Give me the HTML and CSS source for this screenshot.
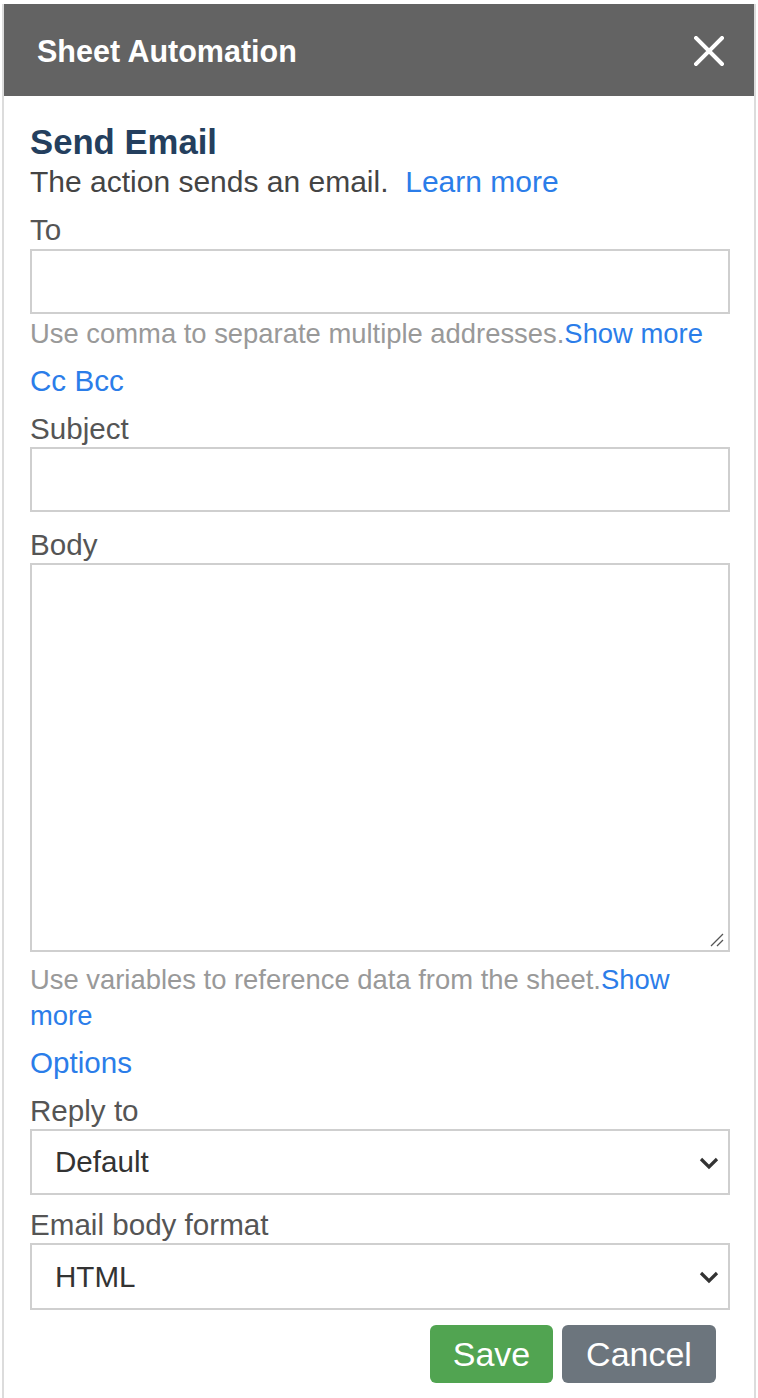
FILE: index.html
```html
<!DOCTYPE html>
<html>
<head>
<meta charset="utf-8">
<link rel="stylesheet" href="styles.css">
</head>
<body>
<div class="panel">
  <div class="header">
    <span class="header-title">Sheet Automation</span>
    <svg class="close" width="30" height="30" viewBox="0 0 30 30"><path d="M2 2 L28 28 M28 2 L2 28" stroke="#fff" stroke-width="4" stroke-linecap="square" fill="none"/></svg>
  </div>
  <div class="content">
    <h1 class="title">Send Email</h1>
    <p class="desc">The action sends an email.&nbsp; <a class="link">Learn more</a></p>
    <div class="label lbl-to">To</div>
    <div class="box box-to"></div>
    <p class="help">Use comma to separate multiple addresses.<a class="link">Show more</a></p>
    <a class="link block-link ccbcc">Cc Bcc</a>
    <div class="label">Subject</div>
    <div class="box box-subject"></div>
    <div class="label lbl-body">Body</div>
    <div class="box box-body">
      <svg class="grip" width="16" height="16" viewBox="0 0 16 16"><path d="M3 15 L15 3 M9 15 L15 9" stroke="#555" stroke-width="1.3" fill="none"/></svg>
    </div>
    <p class="help help2">Use variables to reference data from the sheet.<a class="link">Show</a> <a class="link">more</a></p>
    <a class="link block-link options">Options</a>
    <div class="label">Reply to</div>
    <div class="select select-reply"><span>Default</span><svg width="22" height="14" viewBox="0 0 22 14"><path d="M3 3 L11 11 L19 3" stroke="#333" stroke-width="3.2" fill="none"/></svg></div>
    <div class="label">Email body format</div>
    <div class="select select-format"><span>HTML</span><svg width="22" height="14" viewBox="0 0 22 14"><path d="M3 3 L11 11 L19 3" stroke="#333" stroke-width="3.2" fill="none"/></svg></div>
    <div class="actions">
      <button class="btn btn-save">Save</button>
      <button class="btn btn-cancel">Cancel</button>
    </div>
  </div>
</div>
</body>
</html>
```
FILE: styles.css
```css
html, body {
  margin: 0;
  padding: 0;
  background: #ffffff;
}
body {
  font-family: "Liberation Sans", Arial, Helvetica, sans-serif;
  width: 758px;
  height: 1398px;
  overflow: hidden;
}
.panel {
  margin: 4px 2px 0 2px;
  border-left: 2px solid #dcdcdc;
  border-right: 2px solid #dcdcdc;
  height: 1394px;
  box-sizing: border-box;
  background: #fff;
}
.header {
  height: 92px;
  background: #636363;
  display: flex;
  align-items: center;
  justify-content: space-between;
  padding: 0 30px 0 33px;
}
.header-title {
  color: #fff;
  font-weight: bold;
  font-size: 30.5px;
  line-height: 36px;
  margin-top: 1px;
}
.close {
  display: block;
  margin-top: 1px;
}
.content {
  padding: 26px 24px 0 26px;
}
.title {
  margin: 0;
  font-size: 34.7px;
  line-height: 40px;
  font-weight: bold;
  color: #243f5e;
}
.desc {
  margin: 2px 0 0;
  font-size: 30px;
  line-height: 36px;
  color: #444;
}
.link {
  color: #2b7de9;
  text-decoration: none;
  cursor: pointer;
}
.label {
  margin-top: 12px;
  font-size: 29.6px;
  line-height: 36px;
  color: #555;
}
.lbl-body { margin-top: 15px; }
.box {
  border: 2px solid #cfcfcf;
  box-sizing: border-box;
  margin-top: 0;
  position: relative;
}
.box-to { height: 65px; margin-top: 1px; }
.box-subject { height: 65px; }
.box-body { height: 389px; }
.grip {
  position: absolute;
  right: 4px;
  bottom: 3px;
}
.help {
  margin: 2px 0 0;
  font-size: 27.4px;
  line-height: 36px;
  color: #999;
}
.help2 { margin-top: 10px; }
.block-link {
  display: block;
  margin-top: 11px;
  font-size: 29.6px;
  line-height: 36px;
}
.select {
  border: 2px solid #cfcfcf;
  box-sizing: border-box;
  height: 66px;
  display: flex;
  align-items: center;
  justify-content: space-between;
  padding: 0 8px 0 23px;
  font-size: 29.6px;
  color: #333;
}
.select svg { display: block; margin-top: 1px; }
.select-format { height: 67px; }
.actions {
  display: flex;
  justify-content: flex-end;
  gap: 9px;
  margin-top: 15px;
  padding-right: 14px;
}
.btn {
  font-family: inherit;
  font-size: 34px;
  color: #fff;
  border: none;
  border-radius: 6px;
  height: 58px;
  padding: 0;
  line-height: 58px;
}
.btn-save {
  width: 123px;
  background: #51a451;
}
.btn-cancel {
  width: 154px;
  background: #6c757d;
}
```
